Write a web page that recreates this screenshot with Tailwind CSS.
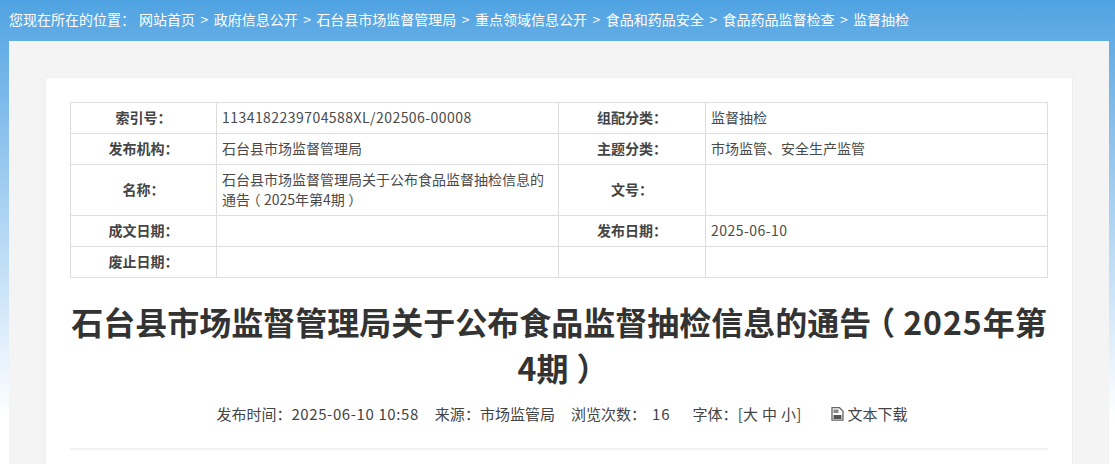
<!DOCTYPE html>
<html lang="zh-CN">
<head>
    <meta charset="UTF-8">
    <meta name="viewport" content="width=device-width, initial-scale=1.0">
    <title>监督抽检</title>
    <script src="https://cdn.jsdelivr.net/npm/@tailwindcss/browser@4"></script>
</head>
<body class="font-['Noto_Sans_CJK_SC','Noto_Sans',sans-serif] text-[#333]">
    <div class="h-[464px] overflow-hidden bg-gradient-to-b from-[#4fa3e2] to-white to-[90%] pl-[9px] pr-[6px]">
        <div class="flex items-center h-[41px] pb-[3px] text-[14px] text-white whitespace-nowrap">
            <span class="mr-[4px]">您现在所在的位置<span class="font-['Noto_Sans_CJK_TC']">：</span></span>
            <span>网站首页</span><span class="mx-[5px] w-[8.7px] text-center">&gt;</span>
            <span>政府信息公开</span><span class="mx-[5px] w-[8.7px] text-center">&gt;</span>
            <span>石台县市场监督管理局</span><span class="mx-[5px] w-[8.7px] text-center">&gt;</span>
            <span>重点领域信息公开</span><span class="mx-[5px] w-[8.7px] text-center">&gt;</span>
            <span>食品和药品安全</span><span class="mx-[5px] w-[8.7px] text-center">&gt;</span>
            <span>食品药品监督检查</span><span class="mx-[5px] w-[8.7px] text-center">&gt;</span>
            <span>监督抽检</span>
        </div>
        <div class="bg-[#f4f4f4] px-[36px] pt-[36px] h-[423px]">
            <div class="bg-white border border-[#eeeeee] h-[400px] pl-[24px] pt-[24px]">
                <table class="w-[977px] table-fixed border-collapse text-[14px] leading-[20px] text-[#4a4a4a] [&_td]:pb-[2px]">
                    <colgroup>
                        <col class="w-[146px]"><col class="w-[342px]"><col class="w-[147px]"><col class="w-[342px]">
                    </colgroup>
                    <tbody>
                        <tr class="h-[31px]">
                            <td class="border border-[#dddddd] text-center font-bold text-[#444]">索引号<span class="font-['Noto_Sans_CJK_TC']">：</span></td>
                            <td class="border border-[#dddddd] px-[5px] tracking-[0.45px]">1134182239704588XL/202506-00008</td>
                            <td class="border border-[#dddddd] text-center font-bold text-[#444]">组配分类<span class="font-['Noto_Sans_CJK_TC']">：</span></td>
                            <td class="border border-[#dddddd] px-[5px]">监督抽检</td>
                        </tr>
                        <tr class="h-[31px]">
                            <td class="border border-[#dddddd] text-center font-bold text-[#444]">发布机构<span class="font-['Noto_Sans_CJK_TC']">：</span></td>
                            <td class="border border-[#dddddd] px-[5px]">石台县市场监督管理局</td>
                            <td class="border border-[#dddddd] text-center font-bold text-[#444]">主题分类<span class="font-['Noto_Sans_CJK_TC']">：</span></td>
                            <td class="border border-[#dddddd] px-[5px]">市场监管、安全生产监管</td>
                        </tr>
                        <tr class="h-[51px]">
                            <td class="border border-[#dddddd] text-center font-bold text-[#444]">名称<span class="font-['Noto_Sans_CJK_TC']">：</span></td>
                            <td class="border border-[#dddddd] px-[5px]">石台县市场监督管理局关于公布食品监督抽检信息的通告<span class="inline-block w-[1em] text-center [font-feature-settings:'halt']">（</span>2025年第4期<span class="inline-block w-[1em] text-center [font-feature-settings:'halt']">）</span></td>
                            <td class="border border-[#dddddd] text-center font-bold text-[#444]">文号<span class="font-['Noto_Sans_CJK_TC']">：</span></td>
                            <td class="border border-[#dddddd] px-[5px]"></td>
                        </tr>
                        <tr class="h-[31px]">
                            <td class="border border-[#dddddd] text-center font-bold text-[#444]">成文日期<span class="font-['Noto_Sans_CJK_TC']">：</span></td>
                            <td class="border border-[#dddddd] px-[5px]"></td>
                            <td class="border border-[#dddddd] text-center font-bold text-[#444]">发布日期<span class="font-['Noto_Sans_CJK_TC']">：</span></td>
                            <td class="border border-[#dddddd] px-[5px] tracking-[0.45px]">2025-06-10</td>
                        </tr>
                        <tr class="h-[31px]">
                            <td class="border border-[#dddddd] text-center font-bold text-[#444]">废止日期<span class="font-['Noto_Sans_CJK_TC']">：</span></td>
                            <td class="border border-[#dddddd] px-[5px]"></td>
                            <td class="border border-[#dddddd]"></td>
                            <td class="border border-[#dddddd] px-[5px]"></td>
                        </tr>
                    </tbody>
                </table>
                <h1 class="w-[978px] mt-[20px] text-center text-[32px] leading-[46px] font-bold text-[#333]">石台县市场监督管理局关于公布食品监督抽检信息的通告<span class="inline-block w-[1em] text-center [font-feature-settings:'halt']">（</span><span class="tracking-[1px]">2025</span>年第4期<span class="inline-block w-[1em] text-center [font-feature-settings:'halt']">）</span></h1>
                <div class="w-[978px] mt-[14px] pl-[6px] pb-[24px] border-b-2 border-[#f2f2f2] flex justify-center items-center text-[15px] leading-[20px] text-[#444] whitespace-nowrap">
                    <span>发布时间<span class="font-['Noto_Sans_CJK_TC']">：</span><span class="tracking-[0.6px]">2025-06-10 10:58</span></span>
                    <span class="ml-[16px]">来源<span class="font-['Noto_Sans_CJK_TC']">：</span>市场监管局</span>
                    <span class="ml-[16px]">浏览次数<span class="font-['Noto_Sans_CJK_TC']">：</span></span>
                    <span class="ml-[6px] tracking-[1px]">16</span>
                    <span class="ml-[22px]">字体<span class="font-['Noto_Sans_CJK_TC']">：</span><span class="tracking-[0.3px]">[大 中 小]</span></span>
                    <svg class="ml-[29px] mr-[4px]" width="13" height="14" viewBox="0 0 13 14">
                        <path d="M1 .7h7.5l3.5 3.5v9H1z" fill="#fff" stroke="#666" stroke-width="1.3"/>
                        <rect x="2.5" y="2.5" width="5" height="3.5" fill="#888"/>
                        <rect x="2.5" y="8" width="8" height="4" fill="#555"/>
                    </svg>
                    <span>文本下载</span>
                </div>
            </div>
        </div>
    </div>
</body>
</html>
